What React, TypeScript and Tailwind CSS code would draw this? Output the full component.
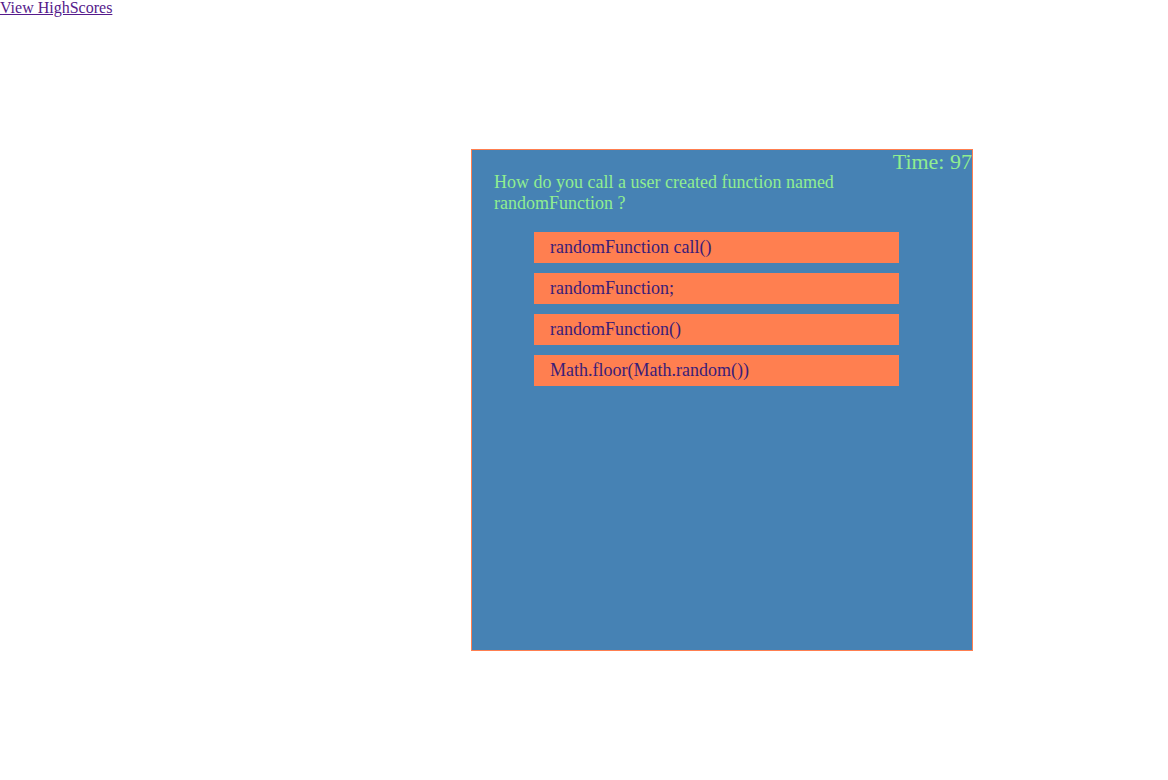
export default function App() {
  return (
    <div className="min-h-[780px] bg-white" style={{ fontFamily: '"Liberation Serif", "Times New Roman", serif' }}>
      <a href="#" className="block w-fit text-[16px] leading-[16px] text-[#551A8B] underline">View HighScores</a>
      <div className="ml-[471px] mt-[133px] h-[502px] w-[502px] border border-[#FF7F50] bg-[#4682B4]">
        <div className="float-right text-[22px] leading-[24px] text-[#90EE90]">Time: 97</div>
        <div className="pl-[22px] pt-[22px] w-[390px] text-[18px] leading-[21px] text-[#90EE90]">
          How do you call a user created function named randomFunction ?
        </div>
        <div className="clear-both ml-[62px] mt-[18px] flex w-[365px] flex-col gap-[10px]">
          {["randomFunction call()", "randomFunction;", "randomFunction()", "Math.floor(Math.random())"].map((t) => (
            <div key={t} className="h-[31px] bg-[#FF7F50] pl-[16px] text-[18px] leading-[31px] text-[#3a1d78]">{t}</div>
          ))}
        </div>
      </div>
    </div>
  );
}
